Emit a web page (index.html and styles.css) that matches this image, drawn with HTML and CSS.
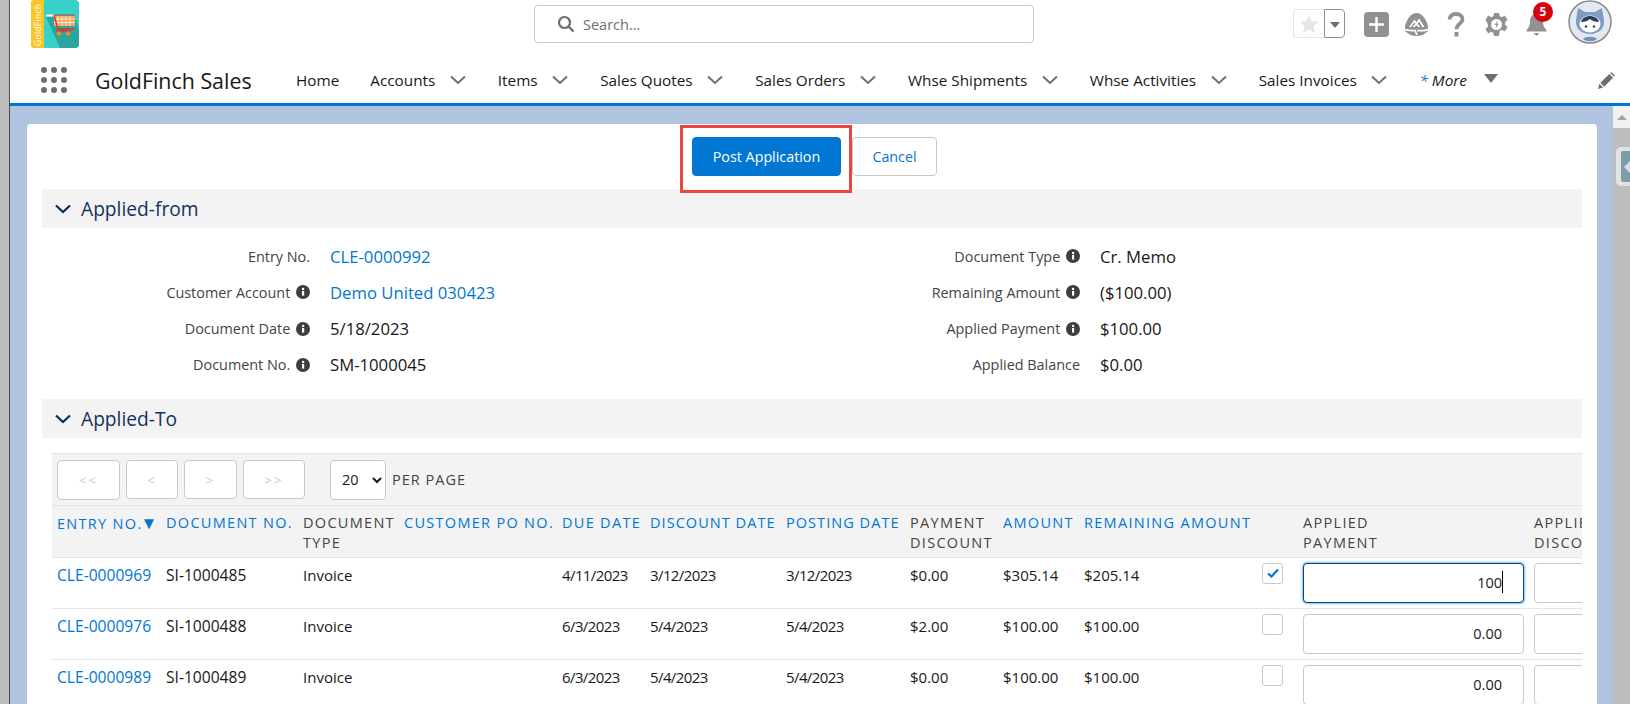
FILE: index.html
```html
<!DOCTYPE html>
<html lang="en">
<head>
    <meta charset="UTF-8">
    <meta name="viewport" content="width=device-width, initial-scale=1.0">
    <title>GoldFinch Sales</title>
    <link rel="stylesheet" href="styles.css">
</head>
<body>

<svg class="sprites" aria-hidden="true">
    <symbol id="info" viewBox="0 0 14 14">
        <circle cx="7" cy="7" r="7" fill="#3e3e3c"/>
        <rect x="6" y="6" width="2.2" height="4.6" fill="#fff"/>
        <circle cx="7.1" cy="4" r="1.2" fill="#fff"/>
    </symbol>
    <symbol id="chev" viewBox="0 0 18 10">
        <polyline points="2,1.5 9,8 16,1.5" fill="none" stroke="#706e6b" stroke-width="2"/>
    </symbol>
</svg>

<div class="frame">
    <div class="window-edge"></div>

    <div class="main">
        <header class="header">
            <div class="topbar">
                <svg class="logo" viewBox="0 0 48 48">
                    <rect width="48" height="48" rx="4" fill="#36d2ca"/>
                    <path d="M15 17H44L48 30V44a4 4 0 0 1-4 4H29Z" fill="#2ba69f"/>
                    <path d="M4 0H13V48H4a4 4 0 0 1-4-4V4a4 4 0 0 1 4-4Z" fill="#fcc524"/>
                    <text class="logo-text" transform="translate(9.500 46) rotate(-90)">GoldFinch</text>
                    <rect x="15" y="14.500" width="9" height="2" fill="#f2f2f2"/>
                    <rect x="23" y="16" width="21" height="10" fill="#f7a35c"/>
                    <path d="M27 16v10M31 16v10M35 16v10M39 16v10M23 19h21M23 22.500h21" stroke="#fde7c8" stroke-width="1"/>
                    <path d="M23 15l4 14H43M25 31H40" fill="none" stroke="#d9352c" stroke-width="1.400"/>
                    <path d="M23 15H44" stroke="#d9352c" stroke-width="1"/>
                    <circle cx="28" cy="33.500" r="2.300" fill="#f28c28"/>
                    <circle cx="37" cy="33.500" r="2.300" fill="#f28c28"/>
                </svg>

                <div class="search">
                    <svg class="search-icon" viewBox="0 0 18 18">
                        <circle cx="7.500" cy="7.500" r="5.500" fill="none" stroke="#706e6b" stroke-width="2.200"/>
                        <path d="M11.500 11.500L16.500 16.500" stroke="#706e6b" stroke-width="2.400"/>
                    </svg>
                    <span>Search...</span>
                </div>

                <div class="actions">
                    <div class="fav">
                        <div class="fav-star">
                            <svg viewBox="0 0 20 20" width="20" height="20"><path d="M10 1l2.700 6.200 6.800.6-5.100 4.500 1.500 6.700L10 15.500 4.100 19l1.500-6.700L.5 7.800l6.800-.6Z" fill="#e5e5e5"/></svg>
                        </div>
                        <div class="fav-menu"></div>
                    </div>
                    <div class="action">
                        <svg width="25" height="25" viewBox="0 0 25 25">
                            <rect width="25" height="25" rx="4" fill="#919191"/>
                            <path d="M12.500 5v15M5 12.500h15" stroke="#fff" stroke-width="2.400"/>
                        </svg>
                    </div>
                    <div class="action">
                        <svg width="23" height="23" viewBox="0 0 23 23">
                            <path d="M11.500 0C17 0 21 6 23 13v5c-3 3-7 5-11.500 5S3 21 0 18v-5C2 6 6 0 11.500 0Z" fill="#919191"/>
                            <path d="M5 14l4.500-6 2 3L14 7l4.500 7M8.500 14l3-3 3 3M0 16.500c4 1 7 1.500 10 1l2 4.500M12 17.500c4 .5 8 0 11-1" fill="none" stroke="#fff" stroke-width="1.700"/>
                        </svg>
                    </div>
                    <div class="action">
                        <svg width="18" height="25" viewBox="0 0 18 25">
                            <path d="M2.500 7.500C2.500 4 5 2 9 2s6.500 2 6.500 5.200c0 4.800-6 4.600-6 10" fill="none" stroke="#919191" stroke-width="3.800"/>
                            <rect x="7.500" y="20" width="4" height="4.500" fill="#919191"/>
                        </svg>
                    </div>
                    <div class="action">
                        <svg width="23" height="23" viewBox="0 0 23 23">
                            <path d="M9 0h5l.7 3.200 2.300 1 2.800-1.700 2.700 4.500-2.400 2.200v2.600l2.400 2.200-2.700 4.500-2.800-1.700-2.300 1L14 23H9l-.7-3.200-2.300-1-2.800 1.700L.500 16l2.400-2.200v-2.600L.500 7l2.700-4.500L6 4.200l2.300-1Z" fill="#919191"/>
                            <circle cx="11.500" cy="11.500" r="5.500" fill="#fff"/>
                            <path d="M12.800 7.500L9.500 12h2l-1 3.500 3.300-4.700h-2Z" fill="#919191"/>
                        </svg>
                    </div>
                    <div class="action action-bell">
                        <svg width="23" height="23" viewBox="0 0 23 23">
                            <path d="M11.500 1c4.500 0 6.500 3.500 6.500 7.500 0 4 1 6 3.500 8.500v1.500h-20V17C4 14.500 5 12.500 5 8.500 5 4.500 7 1 11.500 1Z" fill="#919191"/>
                            <path d="M8.500 20h6l-3 3Z" fill="#919191"/>
                        </svg>
                        <span class="badge">5</span>
                    </div>
                    <svg class="avatar" viewBox="0 0 44 44">
                        <circle cx="22" cy="22" r="21" fill="#e3e9f1" stroke="#8a8a8a" stroke-width="1.500"/>
                        <path d="M10 8l7 4h10l7-4 2 12c1 9-6 14-14 14S7 29 8 20Z" fill="#7f9cc4"/>
                        <path d="M15 39c2-3 12-3 14 0-4 3-10 3-14 0Z" fill="#7290bb"/>
                        <ellipse cx="22" cy="24" rx="10.500" ry="8.500" fill="#fff"/>
                        <path d="M13 22c1-4 5-6 9-6s8 2 9 6c-4 0-7-1-9-3-2 2-5 3-9 3Z" fill="#2a3f5f"/>
                        <circle cx="18" cy="26.500" r="1.200" fill="#2a3f5f"/>
                        <circle cx="26" cy="26.500" r="1.200" fill="#2a3f5f"/>
                    </svg>
                </div>
            </div>

            <nav class="navbar">
                <div class="launcher">
                    <i></i><i></i><i></i><i></i><i></i><i></i><i></i><i></i><i></i>
                </div>
                <div class="app-name">GoldFinch Sales</div>
                <div class="nav-items">
                    <span class="nav-item">Home</span>
                    <span class="nav-item">Accounts <svg class="nav-chev"><use href="#chev"/></svg></span>
                    <span class="nav-item">Items <svg class="nav-chev"><use href="#chev"/></svg></span>
                    <span class="nav-item">Sales Quotes <svg class="nav-chev"><use href="#chev"/></svg></span>
                    <span class="nav-item">Sales Orders <svg class="nav-chev"><use href="#chev"/></svg></span>
                    <span class="nav-item">Whse Shipments <svg class="nav-chev"><use href="#chev"/></svg></span>
                    <span class="nav-item">Whse Activities <svg class="nav-chev"><use href="#chev"/></svg></span>
                    <span class="nav-item">Sales Invoices <svg class="nav-chev"><use href="#chev"/></svg></span>
                    <span class="nav-item nav-more"><em><b>*</b> More</em><i class="more-arrow"></i></span>
                </div>
                <svg class="pencil" viewBox="0 0 18 18">
                    <path d="M0 18l1.500-5.500 4 4ZM2.500 11.500L12 2l4 4-9.500 9.500ZM13 1l1-1 4 4-1 1Z" fill="#706e6b"/>
                </svg>
            </nav>
        </header>

        <div class="workspace">
            <div class="content">
                <div class="card">
                    <div class="button-row">
                        <button class="btn btn-primary">Post Application</button>
                        <button class="btn btn-plain">Cancel</button>
                    </div>
                    <div class="highlight"></div>

                    <div class="section-head">
                        <svg class="section-chev" viewBox="0 0 18 10"><polyline points="2,1.500 9,8 16,1.500" fill="none" stroke="#032d60" stroke-width="2.200"/></svg>
                        Applied-from
                    </div>

                    <div class="fields">
                        <div class="label">Entry No.</div>
                        <div class="value"><a>CLE-0000992</a></div>
                        <div class="label">Document Type <svg class="info"><use href="#info"/></svg></div>
                        <div class="value">Cr. Memo</div>

                        <div class="label">Customer Account <svg class="info"><use href="#info"/></svg></div>
                        <div class="value"><a>Demo United 030423</a></div>
                        <div class="label">Remaining Amount <svg class="info"><use href="#info"/></svg></div>
                        <div class="value">($100.00)</div>

                        <div class="label">Document Date <svg class="info"><use href="#info"/></svg></div>
                        <div class="value">5/18/2023</div>
                        <div class="label">Applied Payment <svg class="info"><use href="#info"/></svg></div>
                        <div class="value">$100.00</div>

                        <div class="label">Document No. <svg class="info"><use href="#info"/></svg></div>
                        <div class="value">SM-1000045</div>
                        <div class="label">Applied Balance</div>
                        <div class="value">$0.00</div>
                    </div>

                    <div class="section-head">
                        <svg class="section-chev" viewBox="0 0 18 10"><polyline points="2,1.500 9,8 16,1.500" fill="none" stroke="#032d60" stroke-width="2.200"/></svg>
                        Applied-To
                    </div>

                    <div class="table-wrap">
                        <div class="pager">
                            <button class="page-btn page-first" disabled>&lt;&lt;</button>
                            <button class="page-btn page-prev" disabled>&lt;</button>
                            <button class="page-btn page-next" disabled>&gt;</button>
                            <button class="page-btn page-last" disabled>&gt;&gt;</button>
                            <select class="page-size"><option>20</option></select>
                            <span class="per-page">PER PAGE</span>
                        </div>

                        <table class="grid">
                            <colgroup>
                                <col style="width:109px"><col style="width:137px"><col style="width:101px"><col style="width:158px">
                                <col style="width:88px"><col style="width:136px"><col style="width:124px"><col style="width:93px">
                                <col style="width:81px"><col style="width:178px"><col style="width:41px"><col style="width:231px"><col style="width:200px">
                            </colgroup>
                            <thead>
                                <tr>
                                    <th><a>Entry No.</a><span class="sort">▼</span></th>
                                    <th><a>Document No.</a></th>
                                    <th>Document Type</th>
                                    <th><a>Customer PO No.</a></th>
                                    <th><a>Due Date</a></th>
                                    <th><a class="tight">Discount Date</a></th>
                                    <th><a class="tight">Posting Date</a></th>
                                    <th>Payment Discount</th>
                                    <th><a>Amount</a></th>
                                    <th><a>Remaining Amount</a></th>
                                    <th></th>
                                    <th>Applied<br>Payment</th>
                                    <th>Applied<br>Discount</th>
                                </tr>
                            </thead>
                            <tbody>
                                <tr>
                                    <td class="doc-id"><a>CLE-0000969</a></td>
                                    <td class="doc-id">SI-1000485</td>
                                    <td>Invoice</td>
                                    <td></td>
                                    <td class="date">4/11/2023</td>
                                    <td class="date">3/12/2023</td>
                                    <td class="date">3/12/2023</td>
                                    <td>$0.00</td>
                                    <td>$305.14</td>
                                    <td>$205.14</td>
                                    <td class="cell-check"><span class="check checked"><svg viewBox="0 0 12 10" width="12" height="10"><path d="M1 5.500L4.500 8.500 11 1.500" fill="none" stroke="#0176d3" stroke-width="2.200"/></svg></span></td>
                                    <td class="cell-input"><div class="amount focused"><input value="100"><span class="caret"></span></div></td>
                                    <td class="cell-input"><div class="amount"><input value=""></div></td>
                                </tr>
                                <tr>
                                    <td class="doc-id"><a>CLE-0000976</a></td>
                                    <td class="doc-id">SI-1000488</td>
                                    <td>Invoice</td>
                                    <td></td>
                                    <td class="date">6/3/2023</td>
                                    <td class="date">5/4/2023</td>
                                    <td class="date">5/4/2023</td>
                                    <td>$2.00</td>
                                    <td>$100.00</td>
                                    <td>$100.00</td>
                                    <td class="cell-check"><span class="check"></span></td>
                                    <td class="cell-input"><div class="amount"><input value="0.00"></div></td>
                                    <td class="cell-input"><div class="amount"><input value=""></div></td>
                                </tr>
                                <tr>
                                    <td class="doc-id"><a>CLE-0000989</a></td>
                                    <td class="doc-id">SI-1000489</td>
                                    <td>Invoice</td>
                                    <td></td>
                                    <td class="date">6/3/2023</td>
                                    <td class="date">5/4/2023</td>
                                    <td class="date">5/4/2023</td>
                                    <td>$0.00</td>
                                    <td>$100.00</td>
                                    <td>$100.00</td>
                                    <td class="cell-check"><span class="check"></span></td>
                                    <td class="cell-input"><div class="amount"><input value="0.00"></div></td>
                                    <td class="cell-input"><div class="amount"><input value=""></div></td>
                                </tr>
                            </tbody>
                        </table>
                    </div>
                </div>
            </div>

            <div class="scrollbar">
                <div class="scroll-up"><i></i></div>
                <div class="scroll-track">
                    <div class="side-tab"><div class="side-tab-inner"><i></i></div></div>
                </div>
            </div>
        </div>
    </div>
</div>

</body>
</html>
```

FILE: styles.css
```css
* {
    box-sizing: border-box;
}

html, body {
    margin: 0;
    height: 704px;
    overflow: hidden;
}

body {
    font-family: "Open Sans", "Noto Sans", sans-serif;
    font-size: 14px;
    color: #181818;
    background-color: #fff;
}

a {
    color: #0176d3;
}

.sprites {
    display: none;
}

.frame {
    display: flex;
    height: 704px;
}

.window-edge {
    width: 10px;
    flex: none;
    background-color: #bdbdbd;
    border-right: 1px solid #4c4c4c;
}

.main {
    flex: 1;
    min-width: 0;
    display: flex;
    flex-direction: column;
}

/* header */
.header {
    height: 106px;
    flex: none;
    background-color: #fff;
    border-bottom: 3px solid #0176d3;
}

.topbar {
    display: flex;
    align-items: flex-start;
    height: 52px;
    padding-left: 21px;
}

.logo {
    width: 48px;
    height: 48px;
    flex: none;
}

.logo-text {
    font-size: 8.500px;
    letter-spacing: .3px;
    fill: #fff;
}

.search {
    display: flex;
    align-items: center;
    width: 500px;
    height: 38px;
    margin: 5px 0 0 455px;
    padding-left: 22px;
    border: 1px solid #c9c9c9;
    border-radius: 4px;
    color: #706e6b;
    font-size: 14.500px;
}

.search-icon {
    width: 18px;
    height: 18px;
    margin-right: 8px;
}

.actions {
    display: flex;
    align-items: center;
    height: 44px;
    margin-left: 259px;
}

.fav {
    display: flex;
    width: 52px;
    height: 29px;
    margin-right: 11px;
    margin-top: 3px;
}

.fav-star {
    width: 31px;
    display: flex;
    align-items: center;
    justify-content: center;
    border: 1px solid #e5e5e5;
    border-right: none;
    border-radius: 4px 0 0 4px;
}

.fav-menu {
    flex: 1;
    position: relative;
    border: 1px solid #919191;
    border-radius: 0 4px 4px 0;
}

.fav-menu::after {
    content: "";
    position: absolute;
    top: 12px;
    left: 5px;
    border-left: 5px solid transparent;
    border-right: 5px solid transparent;
    border-top: 6px solid #706e6b;
}

.action {
    position: relative;
    width: 40px;
    height: 26px;
    margin-top: 5px;
    display: flex;
    align-items: center;
    justify-content: center;
}

.badge {
    position: absolute;
    top: -10px;
    left: 17px;
    width: 20px;
    height: 20px;
    border-radius: 50%;
    background-color: #d8000c;
    color: #fff;
    font-size: 12px;
    font-weight: 700;
    line-height: 20px;
    text-align: center;
}

.avatar {
    width: 44px;
    height: 44px;
    margin-left: 12px;
    flex: none;
}

.navbar {
    display: flex;
    align-items: center;
    height: 51px;
    padding: 5px 15px 0 31px;
}

.launcher {
    display: grid;
    grid-template-columns: repeat(3, 6px);
    gap: 4px;
    margin-right: 28px;
}

.launcher i {
    width: 6px;
    height: 6px;
    border-radius: 50%;
    background-color: #706e6b;
}

.app-name {
    width: 201px;
    font-size: 21.400px;
    color: #181818;
}

.nav-items {
    display: flex;
    align-items: center;
    gap: 31px;
}

.nav-item {
    display: flex;
    align-items: center;
    white-space: pre;
    font-size: 15.300px;
    color: #181818;
}

.nav-chev {
    width: 18px;
    height: 10px;
    margin-left: 9.600px;
}

.nav-more em b {
    color: #0176d3;
    font-weight: 400;
}

.more-arrow {
    margin-left: 17px;
    margin-top: -4px;
    border-left: 7px solid transparent;
    border-right: 7px solid transparent;
    border-top: 9px solid #706e6b;
}

.pencil {
    width: 17px;
    height: 17px;
    margin-left: auto;
}

/* page body */
.workspace {
    flex: 1;
    min-height: 0;
    display: flex;
}

.content {
    flex: 1;
    min-width: 0;
    padding: 18px 16px 0 17px;
    background-color: #b0c4df;
}

.card {
    position: relative;
    height: 600px;
    padding: 13px 15px 0;
    background-color: #fff;
    border-radius: 4px 4px 0 0;
    overflow: hidden;
}

.button-row {
    display: flex;
    justify-content: center;
    gap: 11px;
    padding-left: 5px;
    margin-bottom: 13px;
}

.btn {
    height: 39px;
    border-radius: 4px;
    font-family: inherit;
    font-size: 14.300px;
}

.btn-primary {
    width: 149px;
    background-color: #0176d3;
    border: 1px solid #0176d3;
    color: #fff;
}

.btn-plain {
    width: 85px;
    background-color: #fff;
    border: 1px solid #c9c9c9;
    color: #0176d3;
}

.highlight {
    position: absolute;
    top: 1px;
    left: 653px;
    width: 172px;
    height: 68px;
    border: 3px solid #e8473f;
}

.section-head {
    display: flex;
    align-items: center;
    height: 39px;
    padding-left: 12px;
    background-color: #f3f3f3;
    color: #16325c;
    font-size: 19.200px;
}

.section-chev {
    width: 18px;
    height: 10px;
    margin-right: 9px;
}

.fields {
    display: grid;
    grid-template-columns: 268px 250px 480px 1fr;
    grid-auto-rows: 36.250px;
    column-gap: 20px;
    margin: 10px 0 16px;
}

.label {
    display: flex;
    align-items: center;
    justify-content: flex-end;
    white-space: pre;
    color: #444;
    font-size: 14.400px;
}

.info {
    width: 14px;
    height: 14px;
    margin-left: 2px;
}

.value {
    display: flex;
    align-items: center;
    font-size: 16.700px;
    color: #181818;
}

/* table */
.table-wrap {
    margin: 15px 0 0 10px;
    overflow: hidden;
}

.pager {
    display: flex;
    align-items: center;
    height: 53px;
    padding-left: 5px;
    background-color: #f3f3f3;
    border-top: 1px solid #e5e5e5;
    border-bottom: 1px solid #e5e5e5;
}

.page-btn {
    height: 39px;
    padding: 0;
    margin-right: 6px;
    background-color: #fff;
    border: 1px solid #c9c9c9;
    border-radius: 4px;
    color: #c9c9c9;
    font-family: inherit;
    font-size: 13px;
    letter-spacing: 2px;
}

.page-first {
    width: 63px;
    height: 40px;
}

.page-prev {
    width: 52px;
}

.page-next {
    width: 53px;
}

.page-last {
    width: 62px;
}

.page-size {
    width: 56px;
    height: 40px;
    margin-left: 19px;
    padding-left: 7px;
    background-color: #fff;
    border: 1px solid #c9c9c9;
    border-radius: 4px;
    font-family: inherit;
    font-size: 14.500px;
    color: #181818;
}

.per-page {
    margin-left: 6px;
    color: #444;
    font-size: 14.500px;
    letter-spacing: 1px;
}

.grid {
    table-layout: fixed;
    width: 1577px;
    border-collapse: collapse;
}

.grid th {
    height: 51px;
    padding: 7px 0 0 5px;
    vertical-align: top;
    text-align: left;
    font-weight: 400;
    font-size: 14.500px;
    line-height: 20px;
    letter-spacing: 1.300px;
    text-transform: uppercase;
    color: #444;
    background-color: #f3f3f3;
    border-bottom: 1px solid #e5e5e5;
}

.grid th .tight {
    letter-spacing: 1.050px;
}

.sort {
    margin-left: -2px;
    color: #0176d3;
    font-size: 17px;
    letter-spacing: 0;
}

.grid td {
    height: 51px;
    padding: 7px 0 0 5px;
    vertical-align: top;
    font-size: 15px;
    line-height: 20px;
    border-bottom: 1px solid #e5e5e5;
}

.grid td.doc-id {
    font-size: 15.600px;
}

.grid td.date {
    letter-spacing: -.6px;
}

.grid td.cell-check {
    padding: 5px 0 0 5px;
}

.check {
    display: flex;
    align-items: center;
    justify-content: center;
    width: 21px;
    height: 21px;
    border: 1px solid #c9c9c9;
    border-radius: 3px;
    background-color: #fff;
}

.grid td.cell-input {
    padding: 5px 0 0 5px;
}

.amount {
    position: relative;
    width: 221px;
    height: 40px;
}

.amount input {
    display: block;
    width: 100%;
    height: 100%;
    padding: 0 21px 0 10px;
    border: 1px solid #c9c9c9;
    border-radius: 4px;
    outline: none;
    text-align: right;
    font-family: inherit;
    font-size: 14.500px;
    color: #181818;
}

.amount.focused input {
    border-color: #014486;
    box-shadow: 0 0 3px #0176d3;
}

.caret {
    position: absolute;
    top: 8px;
    right: 21px;
    width: 1px;
    height: 22px;
    background-color: #000;
}

/* scrollbar and the tab that sits in it */
.scrollbar {
    width: 17px;
    flex: none;
    display: flex;
    flex-direction: column;
}

.scroll-up {
    height: 22px;
    display: flex;
    align-items: center;
    justify-content: center;
    background-color: #f1f1f1;
}

.scroll-up i {
    border-left: 5px solid transparent;
    border-right: 5px solid transparent;
    border-bottom: 5px solid #a3a3a3;
}

.scroll-track {
    flex: 1;
    padding: 19px 0 0 3px;
    background-color: #bdbdbd;
}

.side-tab {
    height: 39px;
    padding: 4px 0 4px 5px;
    background-color: #e3e3e3;
    border-radius: 5px 0 0 5px;
}

.side-tab-inner {
    height: 100%;
    display: flex;
    align-items: center;
    justify-content: flex-end;
    background-color: #7c9eab;
    border-radius: 2px 0 0 2px;
}

.side-tab-inner i {
    border-top: 6px solid transparent;
    border-bottom: 6px solid transparent;
    border-right: 6px solid #d5dfe3;
}
```
